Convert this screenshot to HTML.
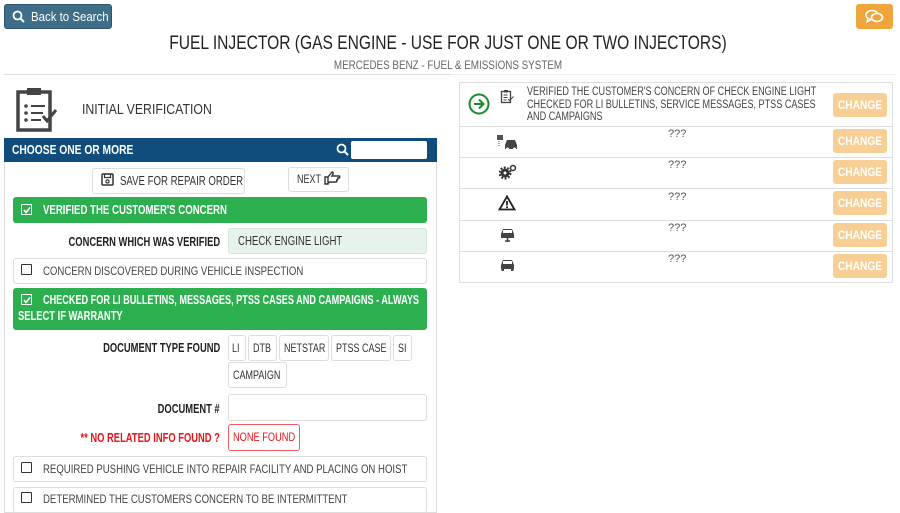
<!DOCTYPE html>
<html><head><meta charset="utf-8"><style>
*{box-sizing:border-box;margin:0;padding:0}
body{width:900px;height:509px;overflow:hidden;background:#fff;font-family:"Liberation Sans",sans-serif;color:#333;position:relative}
.a{position:absolute}
.t{position:absolute;white-space:nowrap;transform:scaleX(.82);transform-origin:left center}
.tc{position:absolute;white-space:nowrap;transform:translateX(-50%) scaleX(.82);transform-origin:center}
.tr{position:absolute;white-space:nowrap;transform:scaleX(.75);transform-origin:right center;text-align:right}
.box{position:absolute;border:1px solid #ddd;border-radius:3px;background:#fff}
.green{position:absolute;background:#2cb04f;border-radius:3px}
.cb{position:absolute;width:11px;height:11px;border:1.5px solid #333;border-radius:1px;background:#fff}
.cbw{position:absolute;width:11px;height:11px;border:1.5px solid #fff;border-radius:1px}
.chg{position:absolute;left:833px;width:54px;height:24px;background:#f7cf94;border-radius:3px;color:#fff;font-size:12px;font-weight:bold;text-align:center;line-height:24px}
.chg span{display:inline-block;transform:scaleX(.85)}
.row{position:absolute;left:460px;width:432px;border-top:1px solid #ddd}
.q{position:absolute;left:668px;font-size:11px;color:#555}
.lbl{font-size:12.5px;font-weight:bold;color:#222}
.dt{font-size:12px;transform:scaleX(.75)}
</style></head><body>
<div class="a" style="left:4px;top:4px;width:108px;height:25px;background:#3f6e88;border:1px solid #2d5570;border-radius:3px"></div>
<svg class="a" style="left:12px;top:10px" width="13" height="13" viewBox="0 0 13 13"><circle cx="5.5" cy="5.5" r="4" fill="none" stroke="#fff" stroke-width="1.8"/><line x1="8.5" y1="8.5" x2="12" y2="12" stroke="#fff" stroke-width="2"/></svg>
<div class="t" style="left:31px;top:9px;font-size:13px;color:#fff;transform:scaleX(.88)">Back to Search</div>
<div class="a" style="left:856px;top:4px;width:37px;height:25px;background:#f0a53c;border-radius:3px"></div>
<svg class="a" style="left:865px;top:9px" width="19" height="15" viewBox="0 0 19 15"><ellipse cx="7" cy="6" rx="6" ry="4.5" fill="none" stroke="#fff" stroke-width="1.6"/><ellipse cx="12" cy="8.5" rx="5.5" ry="4" fill="#f0a53c" stroke="#fff" stroke-width="1.6"/><path d="M3 9.5 L2 13 L6 10.5" fill="#f0a53c" stroke="#fff" stroke-width="1.4"/></svg>
<div class="tc" style="left:448px;top:33px;font-size:19px;color:#222">FUEL INJECTOR (GAS ENGINE - USE FOR JUST ONE OR TWO INJECTORS)</div>
<div class="tc" style="left:448px;top:58px;font-size:12px;color:#666">MERCEDES BENZ - FUEL &amp; EMISSIONS SYSTEM</div>
<div class="a" style="left:4px;top:74px;width:446px;height:1px;background:#ddd"></div>
<div class="a" style="left:450px;top:74px;width:446px;height:1px;background:#eee"></div>
<svg class="a" style="left:16px;top:86px" width="44" height="46" viewBox="0 0 44 46"><rect x="2" y="6" width="32" height="38" fill="none" stroke="#444" stroke-width="3.5"/><rect x="11" y="2" width="14" height="7" fill="#444"/><circle cx="10" cy="20" r="1.8" fill="#444"/><circle cx="10" cy="27" r="1.8" fill="#444"/><circle cx="10" cy="34" r="1.8" fill="#444"/><path d="M15 20h14M15 27h12M15 34h10" stroke="#444" stroke-width="2"/><path d="M27 30l4 5 9-11" fill="none" stroke="#444" stroke-width="3"/></svg>
<div class="t" style="left:82px;top:101px;font-size:15px;color:#333">INITIAL VERIFICATION</div>
<div class="a" style="left:4px;top:138px;width:433px;height:375px;border:1px solid #ddd"></div>
<div class="a" style="left:4px;top:138px;width:433px;height:24px;background:#104d7c"></div>
<div class="t" style="left:12px;top:143px;font-size:12.5px;font-weight:bold;color:#fff">CHOOSE ONE OR MORE</div>
<svg class="a" style="left:336px;top:143px" width="13" height="13" viewBox="0 0 13 13"><circle cx="5.5" cy="5.5" r="4" fill="none" stroke="#fff" stroke-width="1.8"/><line x1="8.5" y1="8.5" x2="12" y2="12" stroke="#fff" stroke-width="2"/></svg>
<div class="a" style="left:351px;top:141px;width:76px;height:18px;background:#fff;border-radius:2px"></div>
<div class="box" style="left:92px;top:168px;width:153px;height:26px"></div>
<svg class="a" style="left:101px;top:173px" width="13" height="13" viewBox="0 0 13 13"><rect x="1" y="1" width="11" height="11" rx="1" fill="none" stroke="#333" stroke-width="1.5"/><rect x="3.5" y="1" width="6" height="3.5" fill="none" stroke="#333" stroke-width="1.2"/><circle cx="6.5" cy="8.5" r="1.6" fill="none" stroke="#333" stroke-width="1.2"/></svg>
<div class="t" style="left:120px;top:173px;font-size:13px;color:#333;transform:scaleX(.74)">SAVE FOR REPAIR ORDER</div>
<div class="box" style="left:288px;top:167px;width:61px;height:25px"></div>
<div class="t" style="left:297px;top:172px;font-size:12px;color:#333;transform:scaleX(.75)">NEXT</div>
<svg class="a" style="left:324px;top:171px" width="17" height="14" viewBox="0 0 17 14"><path d="M1 6h3v7H1zM4 6l4-5c1 0 1.5 1 1 2l-1 2h7c1 0 1 2 0 2h-2c1 0 1 2 0 2h-1c1 0 1 2 0 2H6L4 12" fill="none" stroke="#333" stroke-width="1.4"/></svg>
<div class="green" style="left:13px;top:197px;width:414px;height:26px"></div>
<div class="cbw" style="left:21px;top:204px"></div><svg class="a" style="left:22px;top:205px" width="10" height="10"><path d="M2 5l2 2.5 4-5" fill="none" stroke="#fff" stroke-width="1.6"/></svg>
<div class="t" style="left:43px;top:203px;font-size:12.5px;font-weight:bold;color:#fff;transform:scaleX(.77)">VERIFIED THE CUSTOMER'S CONCERN</div>
<div class="tr lbl" style="right:680px;top:235px">CONCERN WHICH WAS VERIFIED</div>
<div class="a" style="left:228px;top:228px;width:199px;height:26px;background:#e6f3ea;border:1px solid #d4e6da;border-radius:3px"></div>
<div class="t" style="left:238px;top:234px;font-size:12.5px;color:#333;transform:scaleX(.77)">CHECK ENGINE LIGHT</div>
<div class="box" style="left:13px;top:258px;width:414px;height:26px"></div>
<div class="cb" style="left:21px;top:264px"></div>
<div class="t" style="left:43px;top:264px;font-size:12px;color:#444;transform:scaleX(.8)">CONCERN DISCOVERED DURING VEHICLE INSPECTION</div>
<div class="green" style="left:13px;top:288px;width:414px;height:42px"></div>
<div class="cbw" style="left:21px;top:294px"></div><svg class="a" style="left:22px;top:295px" width="10" height="10"><path d="M2 5l2 2.5 4-5" fill="none" stroke="#fff" stroke-width="1.6"/></svg>
<div class="t" style="left:43px;top:293px;font-size:12.5px;font-weight:bold;color:#fff;transform:scaleX(.73)">CHECKED FOR LI BULLETINS, MESSAGES, PTSS CASES AND CAMPAIGNS - ALWAYS</div>
<div class="t" style="left:18px;top:309px;font-size:12.5px;font-weight:bold;color:#fff;transform:scaleX(.75)">SELECT IF WARRANTY</div>
<div class="tr lbl" style="right:680px;top:341px">DOCUMENT TYPE FOUND</div>
<div class="box" style="left:228px;top:335px;width:18px;height:26px"></div><div class="t dt" style="left:232px;top:341px">LI</div>
<div class="box" style="left:248px;top:335px;width:29px;height:26px"></div><div class="t dt" style="left:253px;top:341px">DTB</div>
<div class="box" style="left:279px;top:335px;width:50px;height:26px"></div><div class="t dt" style="left:284px;top:341px">NETSTAR</div>
<div class="box" style="left:331px;top:335px;width:60px;height:26px"></div><div class="t dt" style="left:336px;top:341px">PTSS CASE</div>
<div class="box" style="left:393px;top:335px;width:19px;height:26px"></div><div class="t dt" style="left:398px;top:341px">SI</div>
<div class="box" style="left:228px;top:362px;width:59px;height:26px"></div><div class="t dt" style="left:233px;top:368px">CAMPAIGN</div>
<div class="tr lbl" style="right:680px;top:402px">DOCUMENT #</div>
<div class="box" style="left:228px;top:394px;width:199px;height:27px"></div>
<div class="tr lbl" style="right:680px;top:431px;color:#e8151b">** NO RELATED INFO FOUND ?</div>
<div class="a" style="left:228px;top:424px;width:72px;height:27px;border:1px solid #f05a5e;border-radius:3px"></div>
<div class="t" style="left:233px;top:430px;font-size:12px;color:#e8151b;transform:scaleX(.77)">NONE FOUND</div>
<div class="box" style="left:13px;top:456px;width:414px;height:26px"></div>
<div class="cb" style="left:21px;top:462px"></div>
<div class="t" style="left:43px;top:462px;font-size:12px;color:#444;transform:scaleX(.8)">REQUIRED PUSHING VEHICLE INTO REPAIR FACILITY AND PLACING ON HOIST</div>
<div class="box" style="left:13px;top:487px;width:414px;height:26px"></div>
<div class="cb" style="left:21px;top:492px"></div>
<div class="t" style="left:43px;top:492px;font-size:12px;color:#444;transform:scaleX(.8)">DETERMINED THE CUSTOMERS CONCERN TO BE INTERMITTENT</div>

<div class="a" style="left:459px;top:82px;width:434px;height:201px;border:1px solid #ddd"></div>
<div class="row" style="top:126px"></div><div class="row" style="top:157px"></div><div class="row" style="top:188px"></div><div class="row" style="top:220px"></div><div class="row" style="top:251px"></div>
<svg class="a" style="left:468px;top:93px" width="22" height="22" viewBox="0 0 22 22"><circle cx="11" cy="11" r="9.5" fill="none" stroke="#1a8a2e" stroke-width="2"/><path d="M6 11h9M11 6.5l4.5 4.5-4.5 4.5" fill="none" stroke="#1a8a2e" stroke-width="2"/></svg>
<svg class="a" style="left:500px;top:89px" width="15" height="15" viewBox="0 0 15 15"><rect x="1.5" y="2.5" width="9" height="11" fill="none" stroke="#444" stroke-width="1.3"/><rect x="4" y="1" width="4" height="2.5" fill="#444"/><path d="M3.5 6h4M3.5 8.5h4M3.5 11h3M8 10l1.5 1.5 4-4" fill="none" stroke="#444" stroke-width="1"/></svg>
<div class="t" style="left:527px;top:86px;font-size:11.5px;color:#444;line-height:12.5px;transform:scaleX(.79)">VERIFIED THE CUSTOMER'S CONCERN OF CHECK ENGINE LIGHT<br>CHECKED FOR LI BULLETINS, SERVICE MESSAGES, PTSS CASES<br>AND CAMPAIGNS</div>
<div class="chg" style="top:93px"><span>CHANGE</span></div>
<svg class="a" style="left:496px;top:134px" width="24" height="16" viewBox="0 0 24 16"><rect x="1" y="1" width="6" height="5" fill="#555"/><path d="M3 7v6" stroke="#555" stroke-dasharray="1 1"/><path d="M9 11l2-5h8l2 5v4H9z" fill="#444"/><circle cx="11.5" cy="15" r="1.5" fill="#fff"/><circle cx="18.5" cy="15" r="1.5" fill="#fff"/></svg>
<div class="q" style="top:128px">???</div><div class="chg" style="top:129px"><span>CHANGE</span></div>
<svg class="a" style="left:499px;top:164px" width="18" height="16" viewBox="0 0 18 16"><circle cx="6" cy="9" r="4.5" fill="#333"/><circle cx="6" cy="9" r="5.5" fill="none" stroke="#333" stroke-width="2" stroke-dasharray="2 1.5"/><circle cx="6" cy="9" r="1.5" fill="#fff"/><circle cx="14" cy="4" r="2.5" fill="none" stroke="#333" stroke-width="1.5"/></svg>
<div class="q" style="top:159px">???</div><div class="chg" style="top:160px"><span>CHANGE</span></div>
<svg class="a" style="left:498px;top:195px" width="18" height="16" viewBox="0 0 18 16"><path d="M9 1.5L16.5 14.5H1.5Z" fill="none" stroke="#222" stroke-width="1.8"/><path d="M9 6v4.5" stroke="#222" stroke-width="1.8"/><circle cx="9" cy="12.3" r="1" fill="#222"/></svg>
<div class="q" style="top:191px">???</div><div class="chg" style="top:191px"><span>CHANGE</span></div>
<svg class="a" style="left:499px;top:226px" width="17" height="16" viewBox="0 0 17 16"><path d="M2 8l2-5h9l2 5v4H2z" fill="#444"/><rect x="4" y="4" width="9" height="3" fill="#fff"/><path d="M8.5 12v4M6 15h5" stroke="#444" stroke-width="1.5"/></svg>
<div class="q" style="top:222px">???</div><div class="chg" style="top:223px"><span>CHANGE</span></div>
<svg class="a" style="left:499px;top:258px" width="17" height="14" viewBox="0 0 17 14"><path d="M2 7l2-5h9l2 5v4H2z" fill="#444"/><rect x="4" y="3" width="9" height="3" fill="#fff"/><rect x="2.5" y="11" width="2.5" height="2" fill="#444"/><rect x="12" y="11" width="2.5" height="2" fill="#444"/></svg>
<div class="q" style="top:253px">???</div><div class="chg" style="top:254px"><span>CHANGE</span></div>
</body></html>
